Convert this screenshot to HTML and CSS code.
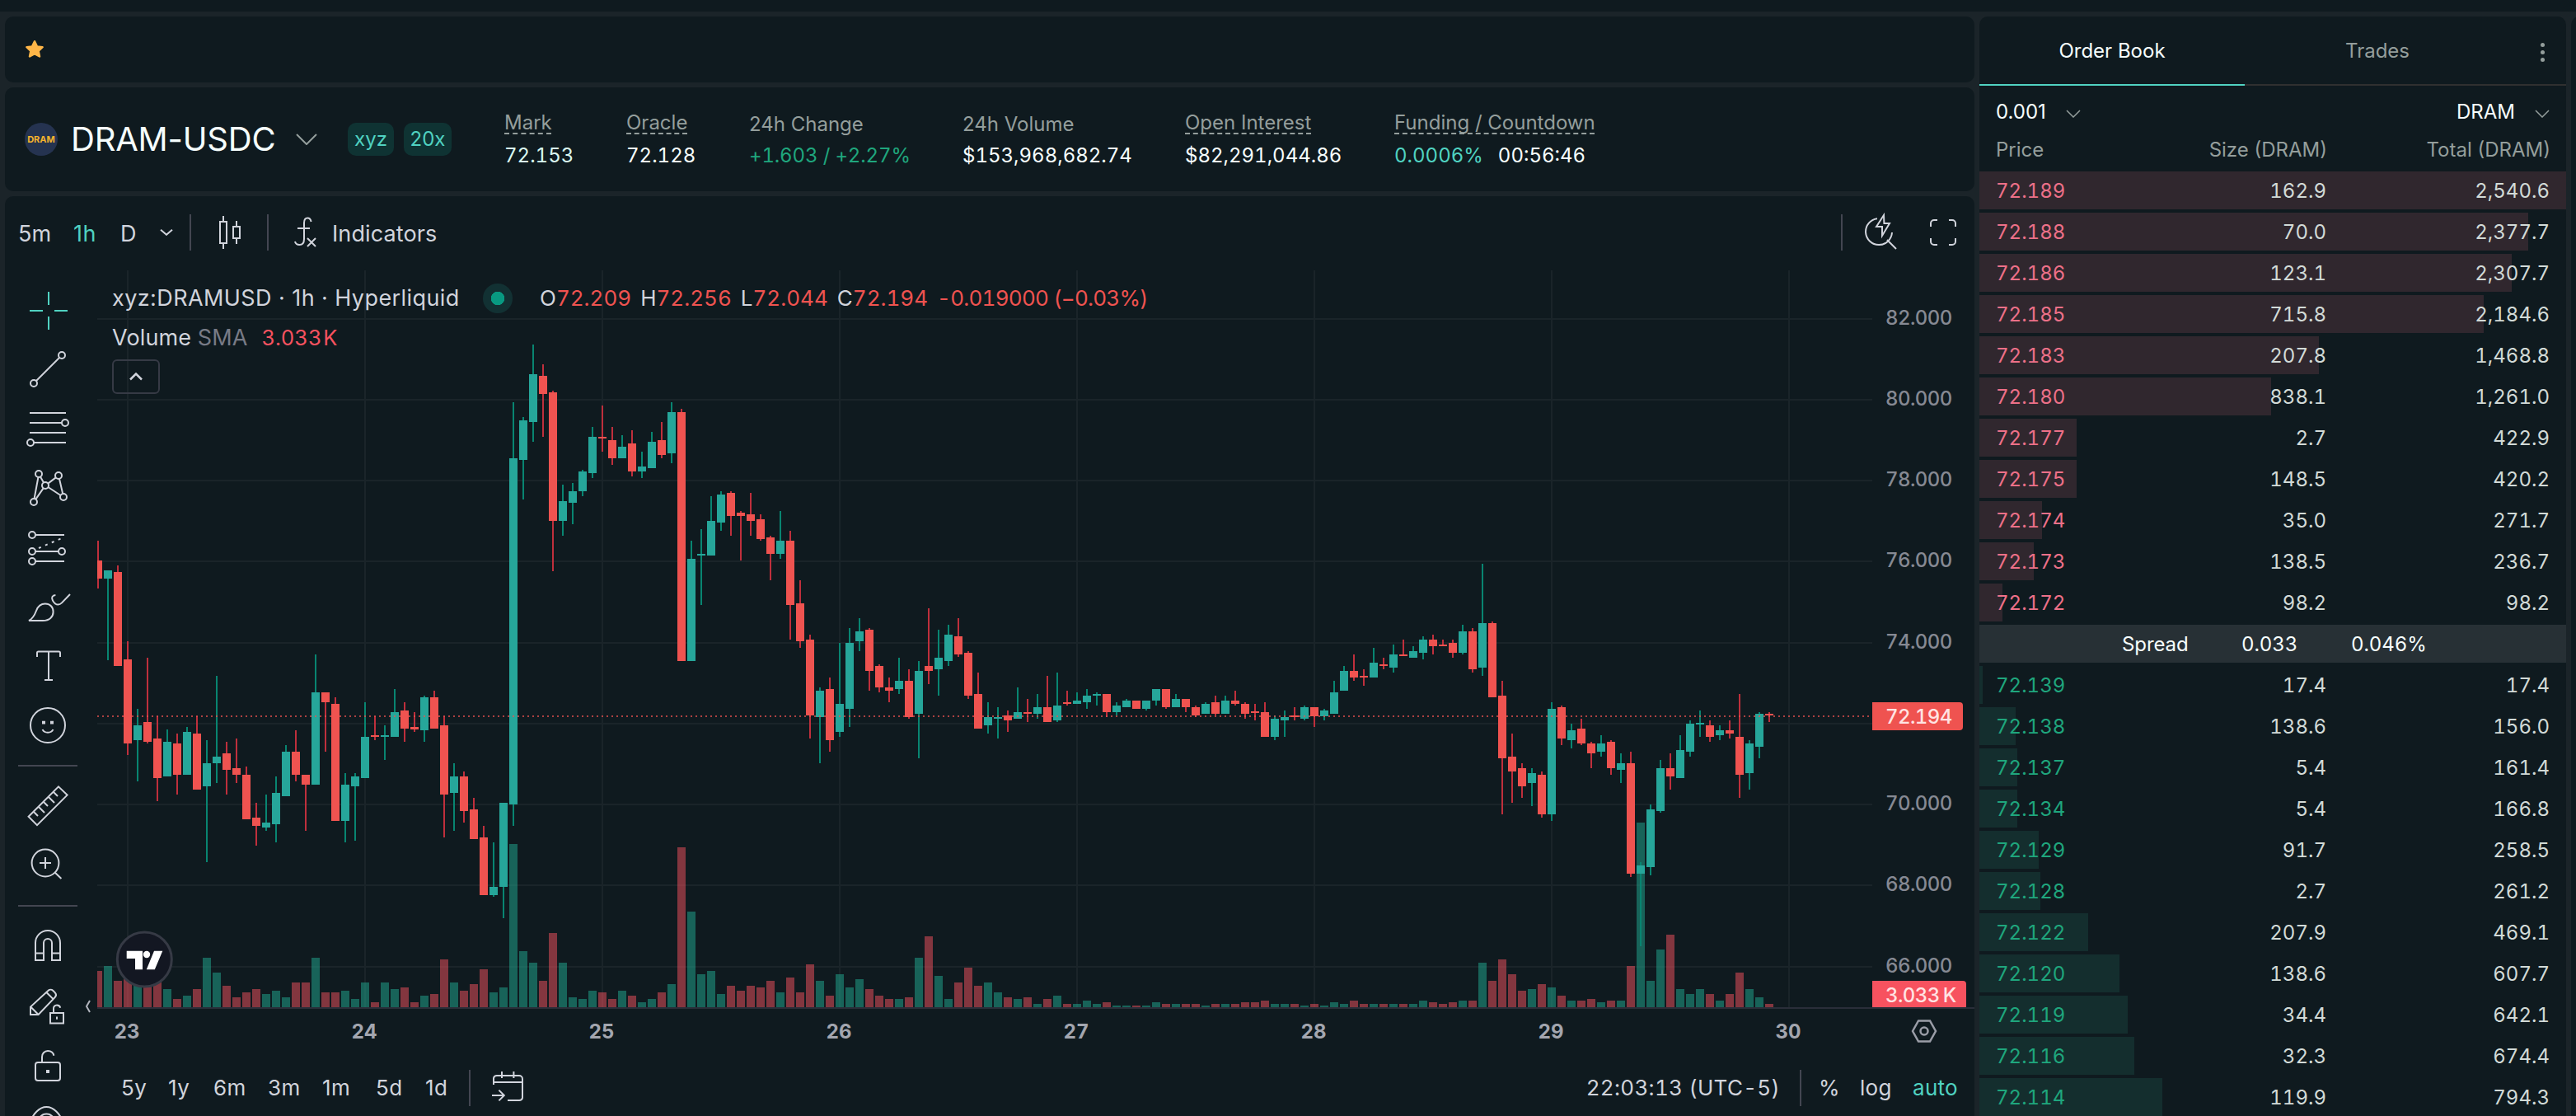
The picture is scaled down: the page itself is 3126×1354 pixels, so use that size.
FILE: index.html
```html
<!DOCTYPE html>
<html lang="en">
<head>
<meta charset="utf-8">
<title>DRAM-USDC</title>
<link rel="stylesheet" href="styles.css">
</head>
<body>
<div class="app">
  <div class="topbar"></div>
  <div class="layout">
    <div class="left">
      <section class="panel favorites">
        <svg class="star" viewBox="0 0 24 24"><path d="M12 2.200l2.900 6.200 6.700.8-5 4.600 1.400 6.700-6-3.400-6 3.400 1.400-6.700-5-4.600 6.700-.8z"/></svg>
      </section>

      <section class="panel market">
        <div class="coin">DRAM</div>
        <h1 class="pair">DRAM-USDC</h1>
        <svg class="chev-lg" viewBox="0 0 26 14"><path d="M1 1l12 12L25 1"/></svg>
        <span class="tag tag-dex">xyz</span>
        <span class="tag tag-lev">20x</span>
        <dl class="stats">
          <div class="stat"><dt class="hint"><span>Mark</span></dt><dd class="flash">72.153</dd></div>
          <div class="stat"><dt class="hint"><span>Oracle</span></dt><dd>72.128</dd></div>
          <div class="stat"><dt>24h Change</dt><dd class="up">+1.603 / +2.27%</dd></div>
          <div class="stat"><dt>24h Volume</dt><dd>$153,968,682.74</dd></div>
          <div class="stat"><dt class="hint"><span>Open Interest</span></dt><dd>$82,291,044.86</dd></div>
          <div class="stat"><dt class="hint"><span>Funding / Countdown</span></dt><dd><span class="teal">0.0006%</span><span class="count">00:56:46</span></dd></div>
        </dl>
      </section>

      <section class="panel chart">
        <div class="toolbar">
          <span class="tf tf-5m">5m</span>
          <span class="tf tf-1h active">1h</span>
          <span class="tf tf-d">D</span>
          <svg class="chev-sm" viewBox="0 0 16 8"><path d="M1 .8l7 6 7-6"/></svg>
          <i class="sep"></i>
          <svg class="ico ico-candles" viewBox="0 0 28 28"><path d="M9.500 4v3.500M9.500 20.500V24M7.500 7.500h4v13h-4zM17.500 7v3.500M17.500 17.500V21M15.500 10.500h4v7h-4z"/></svg>
          <i class="sep"></i>
          <svg class="ico ico-fx" viewBox="0 0 28 28"><path d="M17.800 7.500c-.3-1.500-1-2.200-2.200-2.200-1.500 0-2.100 1-2.100 3V18c0 2.500-.8 3.500-2.800 3.500-1.500 0-2.400-.7-2.700-2M9.500 11.500h7.500M15.500 17.500l5 5M20.500 17.500l-5 5"/></svg>
          <span class="tf indicators">Indicators</span>
          <span class="grow"></span>
          <i class="sep"></i>
          <svg class="ico ico-bolt" viewBox="0 0 28 28"><path d="M11 5.600a8 8 0 1 0 9 8.400M17 18.500l5.500 5.500M15 3.500l-4.500 7H14V16l4.500-7.500H15.200z"/></svg>
          <svg class="ico ico-full" viewBox="0 0 28 28"><path d="M6.500 10.500v-2a2 2 0 0 1 2-2h2M17.500 6.500h2a2 2 0 0 1 2 2v2M21.500 17.500v2a2 2 0 0 1-2 2h-2M10.500 21.500h-2a2 2 0 0 1-2-2v-2"/></svg>
        </div>

        <div class="body">
          <nav class="tools">
            <span class="tool on"><svg viewBox="0 0 28 28"><path d="M18 14.500h8M14.500 18v8M14.500 3v8M3 14.500h8"/></svg></span>
            <span class="tool"><svg viewBox="0 0 28 28"><circle cx="5.500" cy="22.500" r="2"/><circle cx="22.500" cy="5.500" r="2"/><path d="M7 21L21 7"/></svg></span>
            <span class="tool"><svg viewBox="0 0 28 28"><path d="M3 4.500h22M3 10.500h19.500M3 16.500h22M5.500 22.500H25"/><circle cx="24.500" cy="10.500" r="2"/><circle cx="3.500" cy="22.500" r="2"/></svg></span>
            <span class="tool"><svg viewBox="0 0 28 28"><circle cx="8.500" cy="5.500" r="2"/><circle cx="5.500" cy="22.500" r="2"/><circle cx="12.500" cy="12.500" r="2"/><circle cx="20.500" cy="6.500" r="2"/><circle cx="23.500" cy="19.500" r="2"/><path d="M8.200 7.500l-2.400 13M9.500 7.300l2 3.500M11.300 14.200l-4.600 6.600M14.100 11.300l4.800-3.600M21 8.500l2.100 9M14.200 13.500l7.600 5"/></svg></span>
            <span class="tool"><svg viewBox="0 0 28 28"><circle cx="4.500" cy="6.500" r="2"/><circle cx="4.500" cy="16.500" r="2"/><circle cx="4.500" cy="22.500" r="2"/><circle cx="22.500" cy="16.500" r="2"/><path d="M6.500 6.500H24M6.500 16.500h14M6.500 22.500H24"/><path class="dash" d="M8.500 14.500l14-6"/></svg></span>
            <span class="tool"><svg viewBox="0 0 28 28"><path d="M2.500 22.500h8.500c4 0 6.300-2.300 6.300-5.300 0-2.900-1.900-4.900-4.900-4.900-3.200 0-4.500 1.800-5.400 4.200-.9 2.400-2 4.800-4.500 6zM18.700 7c-2 .1-2.700 1.700-1.700 3.300.9 1.700 2.200 2.500 3.300 2.500.8 0 1.500-.4 2.200-1.100l5-5.200"/></svg></span>
            <span class="tool"><svg viewBox="0 0 28 28"><path d="M7.500 8.500V6a.8.8 0 0 1 .8-.8h12.400a.8.8 0 0 1 .8.8v2.500M14.500 5.500v17M12 22.500h5"/></svg></span>
            <span class="tool"><svg viewBox="0 0 28 28"><circle cx="14" cy="14" r="10.500"/><path d="M10.800 16.500c1 2.500 5.400 2.500 6.400 0"/><path class="thick" d="M10.500 12.300h2M15.500 12.300h2"/></svg></span>
            <i class="rule"></i>
            <span class="tool"><svg viewBox="0 0 28 28"><path d="M20.500 2.200l5.300 5.100L7.500 25.600l-5.200-5.200zM5.500 17.500l2.500 2.500M8.500 14.500l3.500 3.500M11.500 11.500l2.500 2.500M14.500 8.500l3.500 3.500M17.500 5.500l2.500 2.500"/></svg></span>
            <span class="tool"><svg viewBox="0 0 28 28"><circle cx="12.500" cy="12.500" r="8.200"/><path d="M9 12.500h7M12.500 9v7M18.300 18.300l3.900 3.700"/></svg></span>
            <i class="rule"></i>
            <span class="tool"><svg viewBox="0 0 28 28"><path d="M6.500 22.500V12a7.500 7.500 0 0 1 15 0v10.500h-5V12a2.500 2.500 0 0 0-5 0v10.500zM6.500 18.300h5M16.500 18.300h5"/></svg></span>
            <span class="tool"><svg viewBox="0 0 28 28"><path d="M3.500 19.500v-4.700L14.300 4.900a2 2 0 0 1 2.800 0l1.300 1.300a2 2 0 0 1 0 2.700L8.300 19.500zM3.700 14.900l4.600 4.600M13.200 6l4.200 4.200M15.500 18.500h8v6.200h-8zM17.500 18.500v-2.600a2 2 0 0 1 2-2.200c1.200 0 1.900.7 2.100 1.700M19.500 20.800v1.600"/></svg></span>
            <span class="tool"><svg viewBox="0 0 28 28"><rect x="6.500" y="12.500" width="15" height="11" rx="1.500"/><path d="M10.500 12.500V9.200a3.500 3.500 0 0 1 3.500-3.700c1.900 0 3.300 1 3.700 2.900"/><rect class="dot" x="13" y="17" width="2" height="2"/></svg></span>
            <span class="tool"><svg viewBox="0 0 28 28"><path d="M3 13.500c2-6 6-10 10.200-10s8.300 4 10.300 10c-2 6-6 10-10.300 10s-8.200-4-10.200-10z"/><circle cx="13.200" cy="13" r="5.200"/></svg></span>
          </nav>

          <div class="main">
            <div class="pane">
              <svg class="plot" id="plot" viewBox="118 328 2278 952"></svg>
              <div class="legend">
                <div class="line1">
                  <span class="sym">xyz:DRAMUSD · 1h · Hyperliquid</span>
                  <i class="live"></i>
                  <span class="ohlc"><span>O<b>72.209</b></span><span>H<b>72.256</b></span><span>L<b>72.044</b></span><span>C<b>72.194</b></span><b class="delta">-0.019000 (−0.03%)</b></span>
                </div>
                <div class="line2"><span>Volume <em>SMA</em></span><b>3.033 K</b></div>
                <span class="collapse"><svg viewBox="0 0 16 10"><path d="M1 8.500l7-7 7 7"/></svg></span>
              </div>
              <svg class="hide-tools" viewBox="0 0 8 16"><path d="M6 1L2 8l4 7"/></svg>
            </div>
            <div class="footer">
              <div class="ranges"><span>5y</span><span>1y</span><span>6m</span><span>3m</span><span>1m</span><span>5d</span><span>1d</span></div>
              <i class="sep"></i>
              <svg class="ico ico-cal" viewBox="0 0 28 28"><path d="M5 13V9a2 2 0 0 1 2-1.500h13.500a2 2 0 0 1 2 2V21a2 2 0 0 1-2 1.500H13.500M5 11.500h17.500M10 5v4M17.200 5v4M4 19.500h7M8.200 16.300l3.200 3.200-3.200 3.200"/></svg>
              <span class="grow"></span>
              <span class="clock">22:03:13 (UTC-5)</span>
              <i class="sep"></i>
              <span class="pct">%</span><span class="log">log</span><span class="auto">auto</span>
            </div>
          </div>
        </div>
      </section>
    </div>

    <section class="panel book">
      <div class="tabs">
        <span class="tab current">Order Book</span>
        <span class="tab">Trades</span>
        <span class="more"><i></i><i></i><i></i></span>
      </div>
      <div class="selects">
        <span>0.001<svg viewBox="0 0 18 10"><path d="M1 1l8 8 8-8"/></svg></span>
        <span>DRAM<svg viewBox="0 0 18 10"><path d="M1 1l8 8 8-8"/></svg></span>
      </div>
      <div class="cols head"><span>Price</span><span>Size (DRAM)</span><span>Total (DRAM)</span></div>
      <div class="rows asks" id="asks"></div>
      <div class="spread"><span>Spread</span><span>0.033</span><span>0.046%</span></div>
      <div class="rows bids" id="bids"></div>
    </section>
    <section class="panel ticket"></section>
  </div>
</div>
<script src="app.js"></script>
</body>
</html>
```
FILE: styles.css
```css
* { box-sizing: border-box; }
body {
  margin: 0;
  background: #1b2429;
  color: #f6fefd;
  font: 24px/32px Inter, "Liberation Sans", sans-serif;
  overflow: hidden;
}
svg { display: block; fill: none; stroke: currentColor; flex: none; }
i, em, b { font-style: normal; font-weight: 400; }

.app { width: 3126px; height: 1354px; display: flex; flex-direction: column; gap: 6px; overflow: hidden; }
.topbar { height: 14px; background: #0f1a1f; flex: none; }
.layout { flex: 1; min-height: 0; display: grid; grid-template-columns: 2390px 712px 20px; gap: 6px; padding-left: 6px; }
.left { display: flex; flex-direction: column; gap: 6px; min-height: 0; }
.panel { background: #0f1a1f; border-radius: 10px; }

/* favorites strip */
.favorites { height: 80px; display: flex; align-items: center; padding-left: 24px; flex: none; }
.star { width: 24px; height: 24px; color: #ffb648; fill: #ffb648; stroke-width: 2.500; stroke-linejoin: round; }

/* market header */
.market { height: 126px; display: flex; align-items: center; padding-left: 24px; flex: none; }
.coin {
  width: 40px; height: 40px; border-radius: 50%; background: #253350;
  color: #f5b32c; font-size: 11px; font-weight: 700; display: flex; align-items: center; justify-content: center;
}
.pair { margin: 0 0 0 16px; width: 273px; font-size: 40px; line-height: 48px; font-weight: 400; white-space: nowrap; letter-spacing: -.2px; }
.chev-lg { width: 26px; height: 14px; color: #949e9c; stroke-width: 2; }
.tag { height: 40px; border-radius: 10px; background: #0f3333; color: #50d2c1; display: flex; align-items: center; justify-content: center; }
.tag-dex { width: 56px; margin-left: 37px; }
.tag-lev { width: 58px; margin-left: 12px; }
.stats { margin: 2px 0 0 64px; display: grid; grid-template-columns: 148px 149px 259px 270px 254px 260px; white-space: nowrap; }
.stat { display: flex; flex-direction: column; justify-content: flex-end; height: 70px; }
.stat dt { color: #949e9c; height: 32px; margin-bottom: 6px; }
.stat dt.hint { margin-bottom: 8px; }
.stat dt.hint span { display: inline-block; height: 30px; line-height: 30px; text-decoration: underline dashed 2px; text-underline-offset: 4px; text-decoration-skip-ink: none; }
.stat dd { margin: 0; font-variant-numeric: tabular-nums; }
.flash { color: #d9f7f0; }
.stat .up { color: #1fa67d; letter-spacing: -.15px; }
.teal { color: #50d2c1; }
.count { margin-left: 18px; }

/* chart */
.chart { flex: 1; min-height: 0; display: flex; flex-direction: column; overflow: hidden; border-bottom-left-radius: 0; border-bottom-right-radius: 0; color: #d1d4dc; }
.toolbar { height: 90px; flex: none; display: flex; align-items: center; padding: 0 10px 2px 16px; }
.sep { width: 2px; height: 44px; background: #434651; flex: none; }
.ico { width: 56px; height: 56px; stroke-width: 1; }
.tf { font-size: 27px; line-height: 36px; padding-top: 4px; }
.tf-5m { width: 67px; }
.tf-1h { width: 57px; letter-spacing: .5px; }
.tf-d { width: 48px; }
.active { color: #50d2c1; }
.chev-sm { width: 16px; height: 8px; stroke-width: 2; margin-right: 20px; }
.ico-candles { margin: 0 16px 0 20px; }
.ico-fx { margin: 0 5px 0 16px; }
.indicators { letter-spacing: .1px; }
.grow { flex: 1; }
.ico-bolt { margin-left: 20px; margin-right: 18px; }

.body { flex: 1; min-height: 0; display: flex; }
.tools { width: 112px; flex: none; padding-top: 12px; display: flex; flex-direction: column; }
.tool { height: 72px; flex: none; display: flex; align-items: center; padding-left: 24px; }
.tool svg { width: 56px; height: 56px; stroke-width: 1; }
.tool.on { color: #50d2c1; }
.tool .dash { stroke-dasharray: 1.5 2.8; }
.tool .thick { stroke-width: 1.800; }
.tool .dot { fill: currentColor; stroke: none; }
.rule { height: 26px; flex: none; width: 72px; margin-left: 16px; background: linear-gradient(#434651, #434651) center / 100% 2px no-repeat; }

.main { flex: 1; min-width: 0; display: flex; flex-direction: column; }
.pane { position: relative; height: 952px; flex: none; }
.plot { width: 2278px; height: 952px; stroke: none; }
.plot text { font-size: 24px; font-weight: 500; letter-spacing: -.6px; font-variant-numeric: tabular-nums; fill: #868993; }
.plot .day { font-weight: 700; letter-spacing: 0; fill: #a3a6af; text-anchor: middle; }
.plot .tag-text { fill: #ffe3e3; }
.hide-tools { position: absolute; left: -15px; top: 885px; width: 8px; height: 16px; stroke-width: 2; color: #b2b5be; }

.legend { position: absolute; left: 18px; top: 16px; font-size: 26px; line-height: 36px; }
.legend b { color: #ef5350; }
.line1, .line2 { display: flex; align-items: center; white-space: nowrap; height: 36px; }
.sym { width: 450px; font-size: 27px; letter-spacing: .42px; }
.live { width: 36px; height: 36px; border-radius: 50%; background: radial-gradient(circle, #089981 8px, #123133 8.5px); margin-right: 33px; }
.ohlc { display: flex; gap: 11px; font-variant-numeric: tabular-nums; }
.ohlc .delta { letter-spacing: -.75px; }
.line2 { margin-top: 12px; gap: 17px; font-variant-numeric: tabular-nums; }
.line2 span { font-size: 27px; letter-spacing: .15px; }
.line2 em { color: #787b86; }
.line2 b { color: #f7525f; word-spacing: -5px; font-size: 25.500px; }
.collapse { margin-top: 8px; width: 58px; height: 42px; border: 2px solid #363a45; border-radius: 6px; display: flex; align-items: center; justify-content: center; }
.collapse svg { width: 16px; height: 10px; stroke-width: 2.500; }

.footer { height: 74px; flex: none; display: flex; align-items: center; padding: 6px 20px 0 29px; font-size: 26px; letter-spacing: .3px; }
.ranges { display: grid; grid-template-columns: 57px 55px 66px 66px 65px 60px 53px; letter-spacing: .5px; }
.footer .ico-cal { margin-left: 18px; margin-bottom: 4px; }
.clock { margin-right: 24px; font-variant-numeric: tabular-nums; }
.pct { margin-left: 21px; width: 50px; }
.log { width: 64px; }
.auto { color: #50d2c1; }

/* order book */
.book { border-bottom-left-radius: 0; border-bottom-right-radius: 0; overflow: hidden; display: flex; flex-direction: column; }
.tabs { height: 84px; flex: none; display: flex; box-shadow: inset 0 -2px #303030; }
.tab { width: 322px; display: flex; align-items: center; justify-content: center; color: #949e9c; }
.tab.current { color: #f6fefd; border-bottom: 2px solid #50d2c1; padding-top: 2px; }
.more { display: flex; flex-direction: column; gap: 4px; margin: 32px 0 0 37px; }
.more i { width: 5px; height: 5px; border-radius: 50%; background: #949e9c; }
.selects { height: 60px; flex: none; display: flex; justify-content: space-between; align-items: center; padding: 4px 20px 0; }
.selects span { display: flex; align-items: center; gap: 24px; }
.selects svg { width: 18px; height: 10px; color: #949e9c; stroke-width: 1.500; margin-top: 3px; }
.cols { display: grid; grid-template-columns: 150px 251px 271px; padding: 2px 20px 0; align-items: center; }
.cols span + span { text-align: right; }
.head { height: 44px; color: #949e9c; padding: 0 19px 9px 20px; grid-template-columns: 150px 252px 271px; flex: none; }
.rows { display: flex; flex-direction: column; gap: 4px; flex: none; font-variant-numeric: tabular-nums; color: #d2dad7; }
.row { height: 46px; background-repeat: no-repeat; background-size: var(--depth) 100%; }
.asks .row { background-image: linear-gradient(#30272e, #30272e); }
.bids .row { background-image: linear-gradient(#142e2e, #142e2e); }
.asks .row span:first-child { color: #ed7088; }
.bids .row span:first-child { color: #1fa67d; }
.spread { height: 46px; margin: 4px 0; flex: none; background: #273035; display: grid; grid-template-columns: 145px 133px 200px; align-items: center; padding: 1px 0 0 173px; font-variant-numeric: tabular-nums; letter-spacing: -.1px; }
.ticket { border-bottom-left-radius: 0; }
```
FILE: app.js
```js
const GREEN = { body: '#26a69a', wick: '#088571', volume: 'rgba(34,171,148,.5)' };
const RED = { body: '#ef5350', wick: '#bf2f3c', volume: 'rgba(247,82,95,.5)' };

// Hourly candles. Each block has its own origin and unit; a row is
// direction, body top, body bottom, wick top, wick bottom, volume top.
const blocks = [
  { first: -3, y0: 500, unit: 1.836, rows: `
R 330 371 286 392 1245
G 352 371 352 553 1234
R 356 566 342 566 1267
R 551 738 510 764 1255
G 698 731 661 823 1265
R 690 735 547 738 1268
R 727 815 677 867 1265
G 735 812 706 812 1285
R 738 808 716 852 1307
G 713 808 702 808 1300
R 716 841 677 841 1285
G 782 834 731 1002 1216
G 768 782 588 826 1249
R 760 797 735 852 1278
R 793 808 727 826 1304
R 808 907 790 907 1293
R 903 922 870 966 1285
G 914 925 852 933 1296
G 848 918 812 958 1289
G 757 856 742 856 1304
R 757 808 709 823 1271
R 808 830 808 933 1271
G 624 830 540 830 1216
R 624 646 624 756 1293
R 650 911 635 911 1293
G 830 911 804 958 1289
G 812 834 804 955 1307
G 724 815 646 815 1271
R 719 723 677 731 1315
G 719 723 698 775 1271
G 668 724 617 724 1285
R 665 705 646 735 1282
R 702 706 668 713 1315
G 635 709 632 735 1300
R 635 705 621 705 1296
R 698 852 677 947 1219
G 812 848 782 933 1271
R 812 889 801 914 1289
R 885 951 859 951 1274
R 947 1076 922 1076 1242
G 1057 1076 958 1079 1293
G 870 1057 870 1127 1282
G 103 874 -22 922 962` },
  { first: 40, y0: 400, unit: 3, rows: `
G 329 474 317 617 2262
G 161 336 53 408 2305
R 167 235 125 390 2370
R 227 696 222 879 2195
G 623 696 563 750 2305
G 587 630 557 708 2431
G 515 588 510 606 2436
G 389 522 353 540 2406
R 390 396 275 444 2413
R 401 468 353 492 2436
G 425 468 383 468 2406
R 413 516 365 534 2424
G 497 516 443 540 2449
G 407 504 371 504 2436
R 401 456 335 468 2412
G 299 450 263 486 2383
R 299 1206 288 1206 1884` },
  { first: 57, y0: 460, unit: 1.96, rows: `
G 427 670 384 670 1266
G 415 419 357 537 1415
G 337 419 278 419 1407
G 274 341 267 361 1462
R 270 325 267 372 1443
R 318 325 314 431 1454
R 321 337 270 372 1443
R 333 380 321 384 1446
R 376 416 372 478 1431
G 384 416 314 427 1458
R 384 537 361 619 1423
R 533 623 478 639 1458
R 619 800 608 855 1392
G 741 803 733 913 1431
R 737 858 710 886 1466
G 772 839 627 851 1415
G 627 784 592 827 1446
G 600 623 568 647 1427
R 596 694 592 741 1450
R 682 733 678 745 1466
R 733 741 710 768 1474
G 717 737 662 749 1474
R 717 804 690 807 1470
G 694 796 670 902 1376
R 682 694 545 725 1325
G 662 690 596 753 1419
G 608 670 584 682 1474
R 612 655 568 661 1435
R 651 753 647 760 1399
R 749 831 698 831 1443
G 804 823 768 843 1435
G 803 807 780 855 1458
R 800 811 788 839 1470
G 792 808 733 808 1474
R 792 796 760 815 1470
G 780 796 749 808 1486
R 780 815 706 815 1474
G 776 811 698 815 1466
R 768 772 741 776 1486
G 764 772 745 772 1486
G 753 768 737 784 1478
G 748 752 745 776 1486
R 749 792 749 804 1482
G 776 792 768 800 1490
G 764 780 760 780 1490
R 764 784 764 784 1490
G 764 784 764 788 1490
G 737 764 737 776 1482
R 737 780 737 784 1486
G 760 780 749 780 1486
R 760 780 760 792 1486
R 780 800 776 804 1486
G 772 796 768 796 1490` },
  { first: 110, y0: 600, unit: 2.08, rows: `
R 524 553 507 557 1286
G 520 553 507 553 1286
R 520 528 495 532 1286
R 528 553 524 566 1281
R 548 552 528 570 1281
R 549 611 524 611 1277
G 566 611 557 619 1286
G 562 570 545 611 1286
R 557 561 537 570 1286
G 537 566 532 570 1290
R 537 560 537 586 1286
G 545 560 541 570 1290
G 499 553 470 553 1281
G 445 495 433 495 1286
R 445 462 403 470 1277
R 457 461 441 482 1286
G 424 462 387 462 1286
R 428 432 412 441 1286
G 403 437 378 449 1286
R 403 408 366 408 1286
G 395 412 383 412 1286
G 366 399 358 416 1277
R 366 383 353 403 1281
R 378 382 366 383 1286
R 374 399 366 412 1281
G 345 399 328 403 1277
R 345 441 337 449 1277
G 324 437 175 458 1181
R 324 512 320 512 1227
R 507 665 470 807 1173
R 661 699 603 778 1210
R 690 736 678 765 1252
G 703 728 690 786 1248
R 707 807 699 815 1235
G 541 807 524 824 1244
R 537 616 532 632 1264
G 595 620 578 641 1277
R 591 628 566 632 1277
R 628 653 624 690 1273
G 628 649 607 661 1281
R 624 690 620 707 1277
G 678 695 653 728 1277
R 678 957 649 965 1190
G 936 957 927 1140 828
G 794 940 782 961 1227
G 690 799 670 803 1148
R 690 711 653 744 1110
G 645 715 607 715 1248
G 578 649 570 661 1260
G 577 581 545 611 1248
R 582 611 570 624 1260
G 595 607 582 620 1277
R 595 603 570 616 1260
R 611 707 503 765 1206
G 628 703 620 744 1248
G 553 636 549 665 1269
R 553 557 549 574 1286` }
];

const FLOOR = 1222;
const rect = (x, y, w, h, fill) => `<rect x="${x}" y="${y}" width="${w}" height="${h}" fill="${fill}"/>`;
let grid = '', volumes = '', candles = '', labels = '';

for (let d = 0; d < 8; d++) {
  const x = 155 + d * 288;
  grid += rect(x - 1, 328, 2, 894, '#1a2429');
  labels += `<text class="day" x="${x - 1}" y="1260">${23 + d}</text>`;
}
for (let k = 0; k < 9; k++) {
  const y = Math.round(386.500 + k * 98.250);
  grid += rect(118, y - 1, 2154, 2, '#1a2429');
  if (k !== 5) labels += `<text x="2288" y="${y + 7}">${82 - 2 * k}.000</text>`;
}
for (const { first, y0, unit, rows } of blocks) {
  rows.trim().split('\n').forEach((line, n) => {
    const [dir, ...v] = line.split(' ');
    const [top, bottom, high, low, vol] = v.map(p => Math.round(y0 + p / unit));
    const c = dir === 'G' ? GREEN : RED;
    const x = 155 + (first + n) * 12;
    volumes += rect(x - 5, vol, 10, FLOOR - vol, c.volume);
    candles += rect(x - 1, high, 2, low - high, c.wick) + rect(x - 5, top, 10, Math.max(2, bottom - top), c.body);
  });
}

document.getElementById('plot').innerHTML = grid + volumes + candles + `
  <path d="M118 869H2272" stroke="#ef5350" stroke-opacity=".7" stroke-width="2" stroke-dasharray="2 4"/>
  ${rect(118, 1222, 2278, 2, '#2a2e39')}
  ${labels}
  <path d="M2272 852h106a4 4 0 0 1 4 4v26a4 4 0 0 1-4 4h-106z" fill="#ef5350"/>
  <text class="tag-text" x="2288" y="878">72.194</text>
  <path d="M2272 1190h110a4 4 0 0 1 4 4v28h-114z" fill="#f7525f"/>
  <text class="tag-text" x="2288" y="1216">3.033<tspan dx="4">K</tspan></text>
  <path d="M2321 1251l7-12.500h14l7 12.500-7 12.500h-14z" fill="none" stroke="#9a9da7" stroke-width="2.500"/>
  <circle cx="2335" cy="1251" r="4.500" fill="none" stroke="#9a9da7" stroke-width="2.500"/>
  <circle cx="175.300" cy="1164" r="33" fill="#131722" stroke="#363a45" stroke-width="3"/>
  <path d="M153.700 1153.700H173V1176.300H164V1163H153.700zM187 1153.700h10.300l-9.500 22.600h-10z" fill="#fff"/>
  <circle cx="178" cy="1158" r="4.200" fill="#fff"/>`;

// price, size, cumulative total, depth bar in pixels
const asks = [
  ['72.189', '162.9', '2,540.6', 712], ['72.188', '70.0', '2,377.7', 666], ['72.186', '123.1', '2,307.7', 646],
  ['72.185', '715.8', '2,184.6', 612], ['72.183', '207.8', '1,468.8', 412], ['72.180', '838.1', '1,261.0', 354],
  ['72.177', '2.7', '422.9', 118], ['72.175', '148.5', '420.2', 118], ['72.174', '35.0', '271.7', 76],
  ['72.173', '138.5', '236.7', 66], ['72.172', '98.2', '98.2', 28]
];
const bids = [
  ['72.139', '17.4', '17.4', 4], ['72.138', '138.6', '156.0', 44], ['72.137', '5.4', '161.4', 46],
  ['72.134', '5.4', '166.8', 46], ['72.129', '91.7', '258.5', 72], ['72.128', '2.7', '261.2', 74],
  ['72.122', '207.9', '469.1', 132], ['72.120', '138.6', '607.7', 170], ['72.119', '34.4', '642.1', 180],
  ['72.116', '32.3', '674.4', 188], ['72.114', '119.9', '794.3', 222]
];
const render = list => list.map(([p, s, t, w]) =>
  `<div class="row cols" style="--depth:${w}px"><span>${p}</span><span>${s}</span><span>${t}</span></div>`).join('');
document.getElementById('asks').innerHTML = render(asks);
document.getElementById('bids').innerHTML = render(bids);
```
